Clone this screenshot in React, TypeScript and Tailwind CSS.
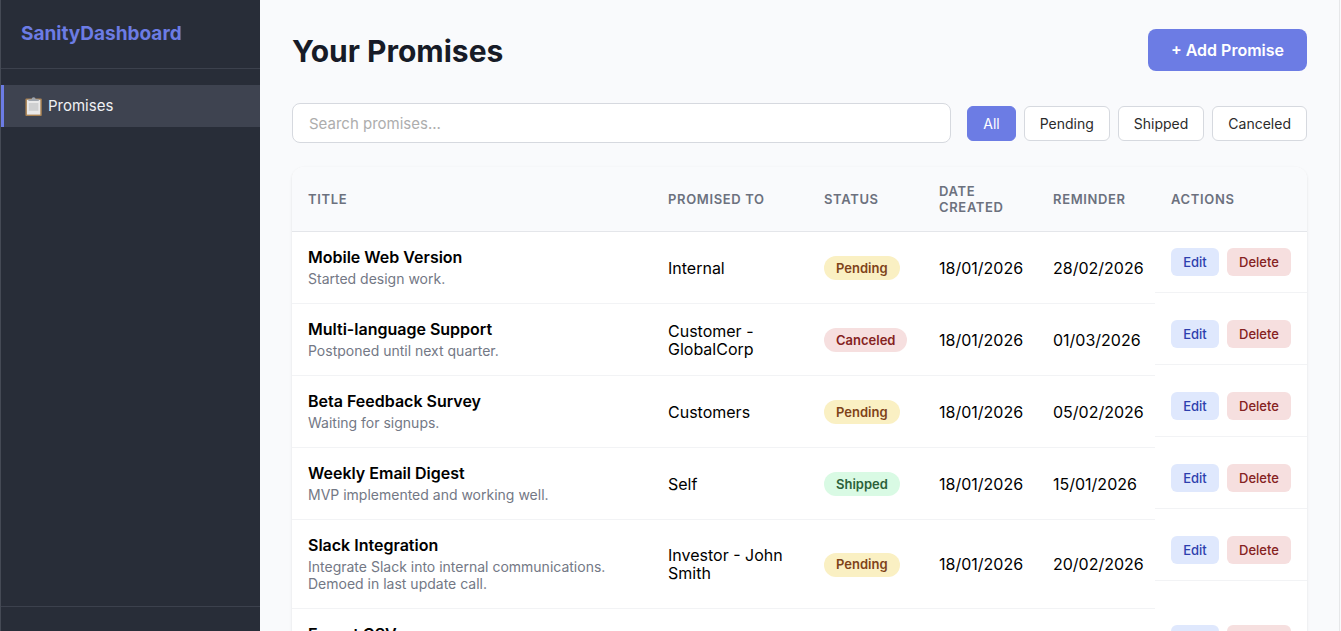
type Status = "Pending" | "Canceled" | "Shipped";

interface PromiseItem {
  title: string;
  note: string;
  to: string;
  status: Status;
  created: string;
  reminder: string;
}

const items: PromiseItem[] = [
  { title: "Mobile Web Version", note: "Started design work.", to: "Internal", status: "Pending", created: "18/01/2026", reminder: "28/02/2026" },
  { title: "Multi-language Support", note: "Postponed until next quarter.", to: "Customer - GlobalCorp", status: "Canceled", created: "18/01/2026", reminder: "01/03/2026" },
  { title: "Beta Feedback Survey", note: "Waiting for signups.", to: "Customers", status: "Pending", created: "18/01/2026", reminder: "05/02/2026" },
  { title: "Weekly Email Digest", note: "MVP implemented and working well.", to: "Self", status: "Shipped", created: "18/01/2026", reminder: "15/01/2026" },
  { title: "Slack Integration", note: "Integrate Slack into internal communications. Demoed in last update call.", to: "Investor - John Smith", status: "Pending", created: "18/01/2026", reminder: "20/02/2026" },
  { title: "Export CSV", note: "", to: "", status: "Pending", created: "", reminder: "" },
];

const badge: Record<Status, string> = {
  Pending: "bg-[#faf0c3] text-[#7f4319]",
  Canceled: "bg-[#f6dfdf] text-[#852221]",
  Shipped: "bg-[#d9fae4] text-[#2b6139]",
};

const headings = ["Title", "Promised To", "Status", "Date Created", "Reminder", "Actions"];
const filters = ["All", "Pending", "Shipped", "Canceled"];

function ClipboardIcon() {
  return (
    <svg width="20" height="20" viewBox="0 0 20 20" aria-hidden="true">
      <rect x="1.4" y="1.6" width="16.4" height="17.4" rx="1" fill="#a98252" />
      <rect x="2.9" y="2.8" width="13.4" height="14.8" fill="#e9e9e9" />
      <rect x="4.8" y="6" width="9.6" height="7.8" fill="#cfd0d1" />
      <path d="M4.4 4V2.2h3.2a2 2 0 0 1 4 0h3.2V4z" fill="#9fa5ad" />
    </svg>
  );
}

function Sidebar() {
  return (
    <aside className="flex h-screen w-[260px] shrink-0 flex-col overflow-hidden border-l border-[#454a55] bg-[#282d38] text-white">
      <div className="border-b border-[#3c414d] px-5 pt-[21px] pb-[21px]">
        <h2 className="text-[19px] leading-[26px] font-bold text-[#6c7ce4]">SanityDashboard</h2>
      </div>
      <nav className="grow pt-4">
        <a href="#promises" className="-ml-px flex h-[42px] items-center gap-1 border-l-4 border-[#6c7ce4] bg-[#3e4350] pt-px pl-5 text-[15px] text-[#f0f1f4]">
          <ClipboardIcon />
          Promises
        </a>
      </nav>
      <div className="h-[25px] shrink-0 border-t border-[#3c414d]" />
    </aside>
  );
}

function Row({ item }: { item: PromiseItem }) {
  return (
    <tr>
      <td className="border-b border-[#f2f3f5] p-4">
        <div className="text-[16px] leading-[18px] font-semibold">{item.title}</div>
        <div className="mt-1 min-h-[17px] text-[14px] leading-[17px] text-[#737885]">{item.note}</div>
      </td>
      <td className="border-b border-[#f2f3f5] p-4 leading-[18px]">{item.to}</td>
      <td className="border-b border-[#f2f3f5] p-4">
        <span className={`inline-flex h-6 items-center rounded-full px-3 text-[13px] font-semibold ${badge[item.status]}`}>{item.status}</span>
      </td>
      <td className="border-b border-[#f2f3f5] p-4">{item.created}</td>
      <td className="border-b border-[#f2f3f5] py-4 pl-4">{item.reminder}</td>
      <td className="p-0 align-top">
        <div className="flex gap-2 border-b border-[#f2f3f5] p-4">
          <button className="h-7 grow-3 basis-12 rounded-md bg-[#dfe8fd] pt-px text-[13px] font-medium text-[#2d3fae]">Edit</button>
          <button className="h-7 grow-4 basis-16 rounded-md bg-[#f6dfdf] pt-px text-[13px] font-medium text-[#852221]">Delete</button>
        </div>
      </td>
    </tr>
  );
}

export default function App() {
  return (
    <div className="flex h-screen overflow-hidden bg-[#f9fafc] font-['Inter','Liberation_Sans',sans-serif] text-black">
      <Sidebar />
      <main className="mr-px min-w-0 grow overflow-hidden border-r border-[#e6e7e9] px-8 pt-[29px]">
        <header className="flex items-center justify-between">
          <h1 className="pt-px text-[30px] leading-10 font-bold text-[#171b27]">Your Promises</h1>
          <button className="h-[42px] rounded-lg bg-[#6c7ce4] px-[23px] text-[16px] font-semibold text-white">+ Add Promise</button>
        </header>
        <div className="mt-8 flex items-center gap-4">
          <input
            type="search"
            aria-label="Search promises"
            placeholder="Search promises..."
            className="h-10 min-w-0 grow rounded-lg border border-[#d6d9df] bg-white px-4 text-[15px] placeholder:text-[#adadad]"
          />
          <div className="flex gap-2">
            {filters.map((f) => (
              <button
                key={f}
                className={
                  f === "All"
                    ? "h-[35px] rounded-md border border-[#6c7ce4] bg-[#6c7ce4] px-[15px] text-[14px] text-white"
                    : "h-[35px] rounded-md border border-[#d6d9df] bg-white px-[15px] text-[14px] text-[#2b2b2b]"
                }
              >
                {f}
              </button>
            ))}
          </div>
        </div>
        <div className="mt-6 overflow-hidden rounded-xl bg-white shadow-[0_1px_3px_rgba(0,0,0,0.1)]">
          <table className="w-full table-fixed border-separate border-spacing-0 text-left text-[16px]">
            <colgroup>
              <col />
              <col className="w-[156px]" />
              <col className="w-[115px]" />
              <col className="w-[114px]" />
              <col className="w-[118px]" />
              <col className="w-[152px]" />
            </colgroup>
            <thead className="bg-[#f9fafc]">
              <tr>
                {headings.map((h) => (
                  <th key={h} className="h-[65px] border-b border-[#e4e6ea] px-4 text-[13px] leading-4 font-semibold tracking-wider text-[#6c717e] uppercase">
                    {h}
                  </th>
                ))}
              </tr>
            </thead>
            <tbody>
              {items.map((item) => (
                <Row key={item.title} item={item} />
              ))}
            </tbody>
          </table>
        </div>
      </main>
    </div>
  );
}
